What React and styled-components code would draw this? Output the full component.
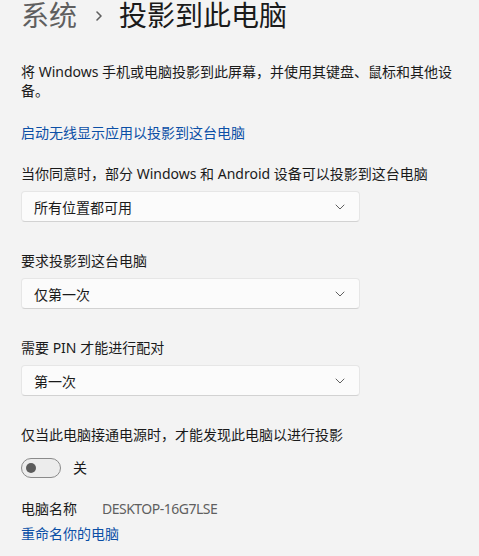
import React, { useState } from 'react';
import styled, { createGlobalStyle } from 'styled-components';

const GlobalStyle = createGlobalStyle`
  html, body {
    margin: 0;
    padding: 0;
    background: #f3f3f3;
  }
  body {
    font-family: "Noto Sans", "Noto Sans CJK SC", sans-serif;
    color: #1a1a1a;
  }
`;

const ChevronRight = () => (
  <svg width="8" height="12" viewBox="0 0 8 12" fill="none">
    <path d="M2 2 L6 6 L2 10" stroke="#5f5f5f" strokeWidth="1.6" strokeLinecap="round" strokeLinejoin="round" />
  </svg>
);

const ChevronDown = () => (
  <svg width="10" height="6" viewBox="0 0 10 6" fill="none">
    <path d="M1 1 L5 5 L9 1" stroke="#606060" strokeWidth="1" strokeLinecap="round" strokeLinejoin="round" />
  </svg>
);

const App = () => {
  const [powerOnly, setPowerOnly] = useState(false);

  return (
    <>
      <GlobalStyle />
      <Page>
        <Breadcrumb>
          <Crumb>系统</Crumb>
          <Separator>
            <ChevronRight />
          </Separator>
          <Current>投影到此电脑</Current>
        </Breadcrumb>

        <Description>
          将 Windows 手机或电脑投影到此屏幕，并使用其键盘、鼠标和其他设备。
        </Description>

        <TopLink href="#">启动无线显示应用以投影到这台电脑</TopLink>

        <Settings>
          <Setting>
            <Label>当你同意时，部分 Windows 和 Android 设备可以投影到这台电脑</Label>
            <Select>
              <span>所有位置都可用</span>
              <ChevronDown />
            </Select>
          </Setting>

          <Setting>
            <Label>要求投影到这台电脑</Label>
            <Select>
              <span>仅第一次</span>
              <ChevronDown />
            </Select>
          </Setting>

          <Setting>
            <Label>需要 PIN 才能进行配对</Label>
            <Select>
              <span>第一次</span>
              <ChevronDown />
            </Select>
          </Setting>

          <Setting $gap={13}>
            <Label>仅当此电脑接通电源时，才能发现此电脑以进行投影</Label>
            <ToggleRow>
              <Toggle $on={powerOnly} onClick={() => setPowerOnly(!powerOnly)}>
                <Knob $on={powerOnly} />
              </Toggle>
              <ToggleText>{powerOnly ? '开' : '关'}</ToggleText>
            </ToggleRow>
          </Setting>
        </Settings>

        <NameBlock>
          <NameRow>
            <NameLabel>电脑名称</NameLabel>
            <NameValue>DESKTOP-16G7LSE</NameValue>
          </NameRow>
          <BottomLink href="#">重命名你的电脑</BottomLink>
        </NameBlock>
      </Page>
    </>
  );
};

const Page = styled.div`
  padding: 0 21px;
  width: 437px;
  font-size: 14px;
`;

const Breadcrumb = styled.div`
  display: flex;
  align-items: center;
  height: 32px;
  margin-top: -1px;
  font-size: 28px;
  line-height: 32px;
`;

const Crumb = styled.span`
  color: #5f5f5f;
`;

const Separator = styled.span`
  display: flex;
  align-items: center;
  margin: 2px 16px 0 18px;
`;

const Current = styled.span`
  color: #1b1b1b;
`;

const Description = styled.p`
  margin: 31px 0 0;
  line-height: 19px;
`;

const TopLink = styled.a`
  display: block;
  margin-top: 23px;
  line-height: 20px;
  color: #0b4fa6;
  text-decoration: none;
`;

const Settings = styled.div`
  display: flex;
  flex-direction: column;
  gap: 29px;
  margin-top: 21px;
`;

const Setting = styled.div`
  display: flex;
  flex-direction: column;
  gap: ${(p) => p.$gap || 7}px;
`;

const Label = styled.div`
  line-height: 20px;
`;

const Select = styled.div`
  box-sizing: border-box;
  display: flex;
  align-items: center;
  justify-content: space-between;
  width: 339px;
  height: 31px;
  padding: 0 14px 0 12px;
  background: #fbfbfb;
  border: 1px solid #e6e6e6;
  border-bottom-color: #d2d2d2;
  border-radius: 4px;
  color: #1a1a1a;
`;

const ToggleRow = styled.div`
  display: flex;
  align-items: center;
  gap: 12px;
`;

const Toggle = styled.div`
  box-sizing: border-box;
  position: relative;
  width: 40px;
  height: 20px;
  border-radius: 10px;
  border: 1px solid ${(p) => (p.$on ? '#0b4fa6' : '#8a8a8a')};
  background: ${(p) => (p.$on ? '#0b4fa6' : '#ececec')};
  cursor: pointer;
`;

const Knob = styled.span`
  position: absolute;
  top: 4px;
  left: ${(p) => (p.$on ? '24px' : '4px')};
  width: 10px;
  height: 10px;
  border-radius: 50%;
  background: ${(p) => (p.$on ? '#fff' : '#5b5b5b')};
`;

const ToggleText = styled.span`
  line-height: 20px;
`;

const NameBlock = styled.div`
  display: flex;
  flex-direction: column;
  gap: 5px;
  margin-top: 21px;
`;

const NameRow = styled.div`
  display: flex;
  gap: 25px;
  line-height: 20px;
`;

const NameLabel = styled.span`
  color: #1a1a1a;
`;

const NameValue = styled.span`
  color: #5f5f5f;
  letter-spacing: -0.5px;
`;

const BottomLink = styled.a`
  line-height: 20px;
  color: #0b4fa6;
  text-decoration: none;
`;

export default App;
